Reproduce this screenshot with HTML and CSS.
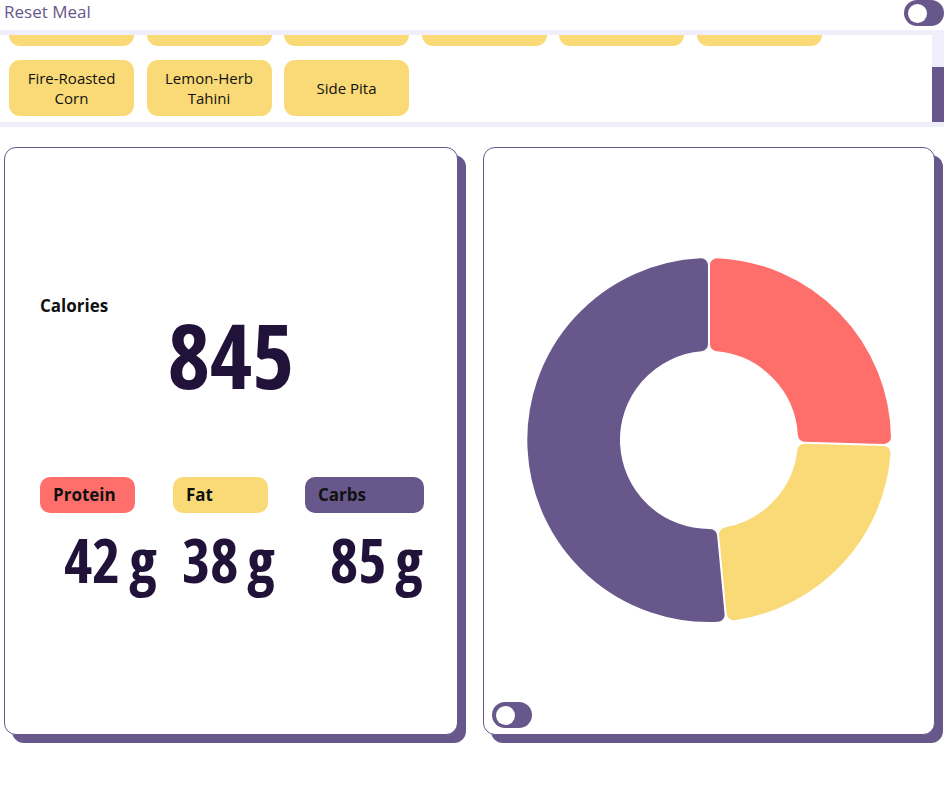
FILE: index.html
```html
<!DOCTYPE html>
<html lang="en">
<head>
<meta charset="utf-8">
<title>Meal Builder</title>
<link rel="stylesheet" href="styles.css">
</head>
<body>
<header class="topbar">
  <span class="reset">Reset Meal</span>
  <span class="toggle"><span class="knob"></span></span>
</header>

<section class="picker">
  <div class="viewport">
    <div class="chips">
      <button class="chip">Cilantro-Lime Basmati Rice</button>
      <button class="chip">Grilled Chicken</button>
      <button class="chip">Falafel</button>
      <button class="chip">Hummus</button>
      <button class="chip">Tabbouleh</button>
      <button class="chip">Pickled Onions</button>
      <button class="chip">Fire-Roasted Corn</button>
      <button class="chip">Lemon-Herb Tahini</button>
      <button class="chip">Side Pita</button>
    </div>
  </div>
  <div class="track"><div class="thumb"></div></div>
</section>

<main class="cards">
  <section class="card stats">
    <div class="cal-label">Calories</div>
    <div class="cal-value">845</div>
    <div class="macros">
      <span class="pill protein">Protein</span>
      <span class="pill fat">Fat</span>
      <span class="pill carbs">Carbs</span>
      <span class="amount a1">42<span class="unit">g</span></span>
      <span class="amount a2">38<span class="unit">g</span></span>
      <span class="amount a3">85<span class="unit">g</span></span>
    </div>
  </section>

  <section class="card chart">
    <svg class="donut" width="366" height="366" viewBox="0 0 366 366">
      <path class="seg seg-protein" d="M191,8.18 A175,175 0 0 1 357.97,180.01 L278.86,177.74 A96,96 0 0 0 191,87.33 Z"/>
      <path class="seg seg-fat" d="M357.52,196 A175,175 0 0 1 207.57,356.27 L200.05,277.47 A96,96 0 0 0 278.40,193.73 Z"/>
      <path class="seg seg-carbs" d="M191.64,357.79 A175,175 0 1 1 175,8.18 L175,87.33 A96,96 0 0 0 184.12,278.99 Z"/>
    </svg>
    <span class="toggle chart-toggle"><span class="knob"></span></span>
  </section>
</main>
</body>
</html>
```

FILE: styles.css
```css
* { box-sizing: border-box; }

body {
  margin: 0;
  background: #ffffff;
  font-family: "Open Sans", "Liberation Sans", sans-serif;
}

.topbar {
  height: 30px;
  display: flex;
  justify-content: space-between;
  align-items: flex-start;
  padding-left: 4px;
}

.reset {
  font-size: 17px;
  font-weight: 500;
  line-height: 24px;
  color: #67578b;
}

.toggle {
  display: flex;
  align-items: center;
  width: 40px;
  height: 26px;
  border-radius: 13px;
  background: #67578b;
  padding-left: 4px;
}

.knob {
  width: 19px;
  height: 19px;
  border-radius: 50%;
  background: #ffffff;
}

.picker {
  display: flex;
  background: #f1eefb;
  padding: 5px 0;
}

.viewport {
  width: 932px;
  height: 87px;
  overflow: hidden;
  background: #ffffff;
}

.chips {
  display: grid;
  grid-template-columns: repeat(6, 125px);
  gap: 14px 12.5px;
  padding-left: 9px;
  margin-top: -45px;
}

.chip {
  height: 56px;
  border: none;
  border-radius: 11px;
  background: #f9da76;
  color: #111111;
  font-family: "Open Sans", "Liberation Sans", sans-serif;
  font-size: 15px;
  font-weight: 500;
  line-height: 20px;
  padding: 0 10px;
  text-align: center;
}

.track {
  flex: 1;
  padding-top: 32px;
}

.thumb {
  height: 55px;
  background: #67578b;
}

.cards {
  display: grid;
  grid-template-columns: 454px 452px;
  column-gap: 25px;
  padding-left: 4px;
  margin-top: 20px;
  padding-bottom: 20px;
}

.card {
  position: relative;
  height: 588px;
  border: 1px solid #67578b;
  border-radius: 12px;
  background: #ffffff;
  box-shadow: 8px 8px 0 #67578b;
}

.stats {
  padding: 149px 0 0 35px;
  font-family: "Open Sans", "Noto Sans", sans-serif;
  font-weight: 700;
}

.cal-label {
  font-size: 17px;
  line-height: 18px;
  font-stretch: 88%;
  color: #111111;
}

.cal-value {
  margin: -6px 0 0 -35px;
  text-align: center;
  font-size: 90px;
  line-height: 90px;
  font-stretch: 75%;
  color: #21123a;
}

.macros {
  display: grid;
  grid-template-columns: 133px 132px 119px;
  row-gap: 17px;
  margin-top: 78px;
}

.pill {
  height: 36px;
  border-radius: 10px;
  padding-left: 13px;
  font-size: 17px;
  font-stretch: 88%;
  line-height: 36px;
  color: #111111;
}

.protein { width: 95px; background: #fe6f6b; }
.fat { width: 95px; background: #f9da76; }
.carbs { width: 119px; background: #67578b; }

.amount {
  font-size: 60px;
  line-height: 60px;
  font-stretch: 75%;
  color: #21123a;
}

.a1 { padding-left: 24px; }
.a2 { padding-left: 9px; }
.a3 { padding-left: 25px; }

.unit { margin-left: 9px; }

.chart {
  display: flex;
  align-items: center;
  justify-content: center;
}

.donut { display: block; margin-top: -2px; }

.seg { stroke-width: 14; stroke-linejoin: round; }
.seg-protein { fill: #fe6f6b; stroke: #fe6f6b; }
.seg-fat { fill: #f9da76; stroke: #f9da76; }
.seg-carbs { fill: #67578b; stroke: #67578b; }

.chart-toggle {
  position: absolute;
  left: 8px;
  bottom: 6px;
}
```
